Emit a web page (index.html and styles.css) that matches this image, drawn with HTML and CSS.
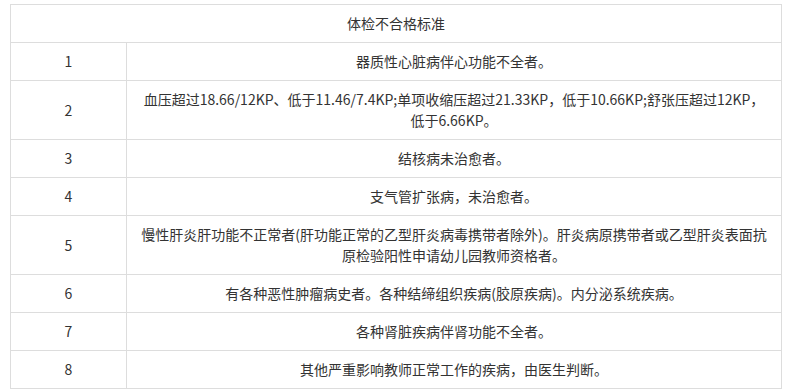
FILE: index.html
```html
<!DOCTYPE html>
<html lang="zh-CN">
<head>
<meta charset="utf-8">
<title>体检不合格标准</title>
<link rel="stylesheet" href="styles.css">
</head>
<body>
<div class="page">
<table class="std">
  <colgroup><col class="c-num"><col class="c-text"></colgroup>
  <thead>
    <tr><th colspan="2">体检不合格标准</th></tr>
  </thead>
  <tbody>
    <tr><td>1</td><td>器质性心脏病伴心功能不全者。</td></tr>
    <tr><td>2</td><td>血压超过18.66/12KP、低于11.46/7.4KP;单项收缩压超过21.33KP，低于10.66KP;舒张压超过12KP，低于6.66KP。</td></tr>
    <tr><td>3</td><td>结核病未治愈者。</td></tr>
    <tr><td>4</td><td>支气管扩张病，未治愈者。</td></tr>
    <tr><td>5</td><td>慢性肝炎肝功能不正常者(肝功能正常的乙型肝炎病毒携带者除外)。肝炎病原携带者或乙型肝炎表面抗原检验阳性申请幼儿园教师资格者。</td></tr>
    <tr><td>6</td><td>有各种恶性肿瘤病史者。各种结缔组织疾病(胶原疾病)。内分泌系统疾病。</td></tr>
    <tr><td>7</td><td>各种肾脏疾病伴肾功能不全者。</td></tr>
    <tr><td>8</td><td>其他严重影响教师正常工作的疾病，由医生判断。</td></tr>
  </tbody>
</table>
</div>
</body>
</html>
```
FILE: styles.css
```css
html, body {
  margin: 0;
  padding: 0;
  background: #fff;
}
.page {
  padding: 4px 0 0 10px;
}
.std {
  border-collapse: collapse;
  width: 772px;
  table-layout: fixed;
  font-family: "Microsoft YaHei", "Noto Sans CJK SC", sans-serif;
  font-size: 14px;
  line-height: 21px;
  color: #333;
}
.c-num { width: 116px; }
.std th,
.std td {
  border: 1px solid #ddd;
  padding: 8px 10px;
  text-align: center;
  vertical-align: middle;
  font-weight: normal;
}
```
